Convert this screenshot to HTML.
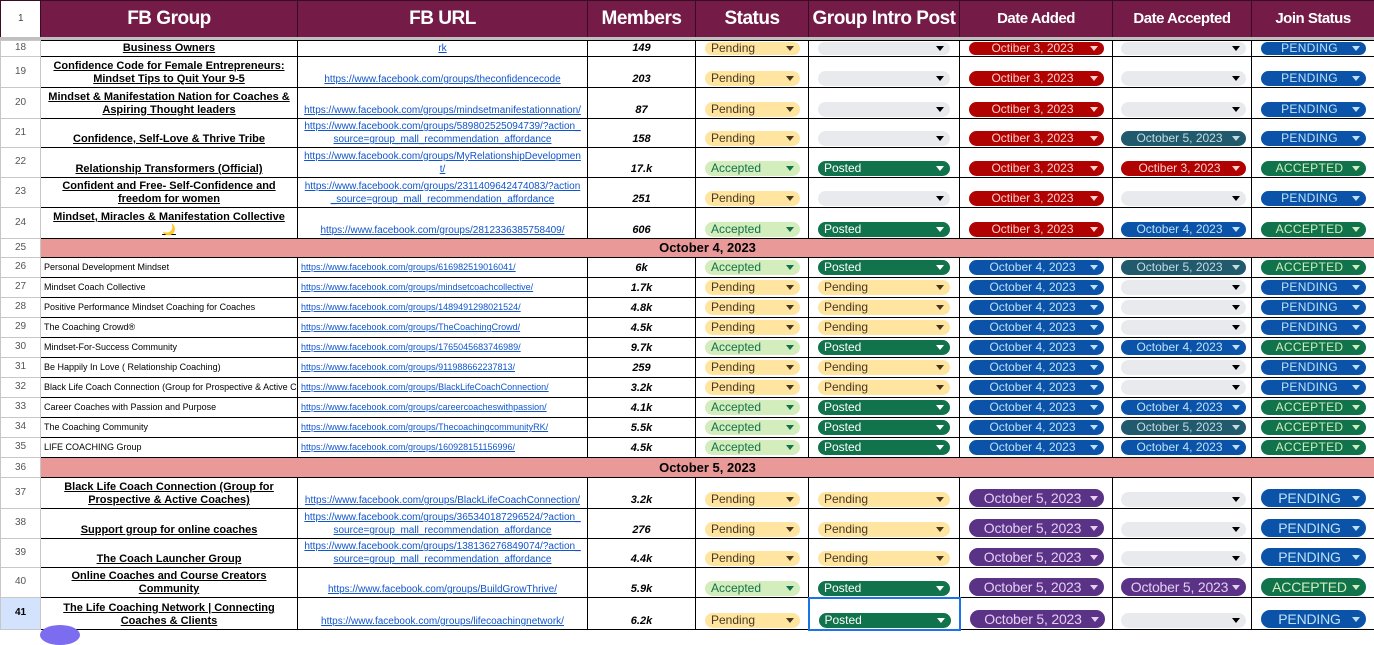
<!DOCTYPE html>
<html><head><meta charset="utf-8"><style>
*{margin:0;padding:0;box-sizing:border-box}
body{width:1374px;height:629px;overflow:hidden;background:#fff;font-family:"Liberation Sans",Arial,sans-serif;position:relative}
table{border-collapse:collapse;table-layout:fixed;width:1374px;position:absolute;left:0}
td{border:1px solid #000;overflow:hidden;white-space:nowrap;font-size:11px;line-height:12px;text-align:center;vertical-align:bottom;padding:0 0 1px 0}
td.n{border:1px solid #c7c7c7;color:#555;font-size:10px;vertical-align:middle;background:#fff}
#hd td{background:#741b47;color:#fff;font-weight:bold;font-size:19px;vertical-align:middle;border-color:#3a0c23;letter-spacing:-0.5px;line-height:20px}
#hd td.sm{font-size:15px}
#hd td.n{background:#fff;color:#444;font-weight:normal;font-size:10px}
.g{font-weight:bold;text-decoration:underline;font-size:11px;line-height:13px;white-space:normal;padding:0 3px 1px}
.s{text-align:left;font-size:9px;padding:0 0 1px 3px;vertical-align:middle}
.u{color:#1155cc;text-decoration:underline;font-size:10px;line-height:13px;white-space:normal;word-break:break-all;padding:0 6px 1px}
.u2{color:#1155cc;text-decoration:underline;font-size:9px;text-align:left;padding:0 0 1px 3px;vertical-align:middle}
.m{font-weight:bold;font-style:italic;font-size:11px;padding-bottom:2px}
.mm{vertical-align:middle;padding:0}
.band td{background:#ea9999;font-size:13px;font-weight:bold;vertical-align:middle;padding:0}
.p{display:flex;justify-content:space-between;align-items:center;height:15px;border-radius:8px;font-size:12px;padding:0 6px;line-height:15px}
.p:after{content:"";border-left:4px solid transparent;border-right:4px solid transparent;border-top:5px solid currentColor;margin-left:auto}
.w1{width:95px;margin-left:9px}.w2{width:132px;margin-left:9px}.w3{width:135px;margin-left:9px}.w4{width:125px;margin-left:8px}.w5{width:105px;margin-left:9px}
.Y{background:#ffe5a0;color:#473821}.A{background:#d4edbc;color:#11734b}.E{background:#e8eaed;color:#000}
.PO{background:#11734b;color:#fff}.R{background:#b10202;color:#ffcfc9}.B{background:#0a53a8;color:#bfe1f6}
.T{background:#215a6c;color:#c6dbe1}.PU{background:#5a3286;color:#e6cff2}
.JP{background:#0a53a8;color:#bfe1f6;letter-spacing:.3px}.JA{background:#11734b;color:#d4edbc;letter-spacing:.3px}
.R span,.B span,.T span,.PU span,.JP span,.JA span{flex:1;text-align:center}
.big .p{height:18px;font-size:14px;border-radius:9px;letter-spacing:-0.2px}
.big .p.sml{height:15px;font-size:12px;border-radius:8px;letter-spacing:0}
.r18 .p{height:13px;line-height:13px}
</style></head><body>
<table id="hd" style="top:0"><colgroup><col style="width:40px"><col style="width:257px"><col style="width:290px"><col style="width:108px"><col style="width:113px"><col style="width:151px"><col style="width:153px"><col style="width:139px"><col style="width:123px"></colgroup>
<tr style="height:37px"><td class="n">1</td><td>FB Group</td><td>FB URL</td><td>Members</td><td>Status</td><td>Group Intro Post</td><td class="sm">Date Added</td><td class="sm">Date Accepted</td><td class="sm">Join Status</td></tr></table>
<div style="position:absolute;top:37px;left:0;width:1374px;height:4px;background:#c0c0c0"></div>
<table style="top:40px"><colgroup><col style="width:40px"><col style="width:257px"><col style="width:290px"><col style="width:108px"><col style="width:113px"><col style="width:151px"><col style="width:153px"><col style="width:139px"><col style="width:123px"></colgroup>
<tr class="r18" style="height:16px"><td class="n">18</td><td class="g">Business Owners</td><td class="u">rk</td><td class="m">149</td><td><div class="p w1 Y">Pending</div></td><td><div class="p w2 E"></div></td><td><div class="p w3 R"><span>Octiber 3, 2023</span></div></td><td><div class="p w4 E"></div></td><td><div class="p w5 JP"><span>PENDING</span></div></td></tr>
<tr style="height:31px"><td class="n">19</td><td class="g">Confidence Code for Female Entrepreneurs: Mindset Tips to Quit Your 9-5</td><td class="u">https://www.facebook.com/groups/theconfidencecode</td><td class="m">203</td><td><div class="p w1 Y">Pending</div></td><td><div class="p w2 E"></div></td><td><div class="p w3 R"><span>Octiber 3, 2023</span></div></td><td><div class="p w4 E"></div></td><td><div class="p w5 JP"><span>PENDING</span></div></td></tr>
<tr style="height:31px"><td class="n">20</td><td class="g">Mindset &amp; Manifestation Nation for Coaches &amp; Aspiring Thought leaders</td><td class="u">https://www.facebook.com/groups/mindsetmanifestationnation/</td><td class="m">87</td><td><div class="p w1 Y">Pending</div></td><td><div class="p w2 E"></div></td><td><div class="p w3 R"><span>Octiber 3, 2023</span></div></td><td><div class="p w4 E"></div></td><td><div class="p w5 JP"><span>PENDING</span></div></td></tr>
<tr style="height:29px"><td class="n">21</td><td class="g">Confidence, Self-Love &amp; Thrive Tribe</td><td class="u">https://www.facebook.com/groups/589802525094739/?action_source=group_mall_recommendation_affordance</td><td class="m">158</td><td><div class="p w1 Y">Pending</div></td><td><div class="p w2 E"></div></td><td><div class="p w3 R"><span>Octiber 3, 2023</span></div></td><td><div class="p w4 T"><span>October 5, 2023</span></div></td><td><div class="p w5 JP"><span>PENDING</span></div></td></tr>
<tr style="height:30px"><td class="n">22</td><td class="g">Relationship Transformers (Official)</td><td class="u">https://www.facebook.com/groups/MyRelationshipDevelopment/</td><td class="m">17.k</td><td><div class="p w1 A">Accepted</div></td><td><div class="p w2 PO">Posted</div></td><td><div class="p w3 R"><span>Octiber 3, 2023</span></div></td><td><div class="p w4 R"><span>Octiber 3, 2023</span></div></td><td><div class="p w5 JA"><span>ACCEPTED</span></div></td></tr>
<tr style="height:30px"><td class="n">23</td><td class="g">Confident and Free- Self-Confidence and freedom for women</td><td class="u">https://www.facebook.com/groups/2311409642474083/?action_source=group_mall_recommendation_affordance</td><td class="m">251</td><td><div class="p w1 Y">Pending</div></td><td><div class="p w2 E"></div></td><td><div class="p w3 R"><span>Octiber 3, 2023</span></div></td><td><div class="p w4 E"></div></td><td><div class="p w5 JP"><span>PENDING</span></div></td></tr>
<tr style="height:31px"><td class="n">24</td><td class="g" style="padding:0 8px 1px">Mindset, Miracles &amp; Manifestation Collective<br>🌙</td><td class="u">https://www.facebook.com/groups/2812336385758409/</td><td class="m">606</td><td><div class="p w1 A">Accepted</div></td><td><div class="p w2 PO">Posted</div></td><td><div class="p w3 R"><span>Octiber 3, 2023</span></div></td><td><div class="p w4 B"><span>October 4, 2023</span></div></td><td><div class="p w5 JA"><span>ACCEPTED</span></div></td></tr>
<tr class="band" style="height:19px"><td class="n" style="background:#fff;font-weight:normal;font-size:10px">25</td><td colspan="8">October 4, 2023</td></tr>
<tr style="height:20px"><td class="n">26</td><td class="s">Personal Development Mindset</td><td class="u2">https://www.facebook.com/groups/616982519016041/</td><td class="m mm">6k</td><td class="mm"><div class="p w1 A">Accepted</div></td><td class="mm"><div class="p w2 PO">Posted</div></td><td class="mm"><div class="p w3 B"><span>October 4, 2023</span></div></td><td class="mm"><div class="p w4 T"><span>October 5, 2023</span></div></td><td class="mm"><div class="p w5 JA"><span>ACCEPTED</span></div></td></tr>
<tr style="height:20px"><td class="n">27</td><td class="s">Mindset Coach Collective</td><td class="u2">https://www.facebook.com/groups/mindsetcoachcollective/</td><td class="m mm">1.7k</td><td class="mm"><div class="p w1 Y">Pending</div></td><td class="mm"><div class="p w2 Y">Pending</div></td><td class="mm"><div class="p w3 B"><span>October 4, 2023</span></div></td><td class="mm"><div class="p w4 E"></div></td><td class="mm"><div class="p w5 JP"><span>PENDING</span></div></td></tr>
<tr style="height:20px"><td class="n">28</td><td class="s">Positive Performance Mindset Coaching for Coaches</td><td class="u2">https://www.facebook.com/groups/1489491298021524/</td><td class="m mm">4.8k</td><td class="mm"><div class="p w1 Y">Pending</div></td><td class="mm"><div class="p w2 Y">Pending</div></td><td class="mm"><div class="p w3 B"><span>October 4, 2023</span></div></td><td class="mm"><div class="p w4 E"></div></td><td class="mm"><div class="p w5 JP"><span>PENDING</span></div></td></tr>
<tr style="height:20px"><td class="n">29</td><td class="s">The Coaching Crowd®</td><td class="u2">https://www.facebook.com/groups/TheCoachingCrowd/</td><td class="m mm">4.5k</td><td class="mm"><div class="p w1 Y">Pending</div></td><td class="mm"><div class="p w2 Y">Pending</div></td><td class="mm"><div class="p w3 B"><span>October 4, 2023</span></div></td><td class="mm"><div class="p w4 E"></div></td><td class="mm"><div class="p w5 JP"><span>PENDING</span></div></td></tr>
<tr style="height:20px"><td class="n">30</td><td class="s">Mindset-For-Success Community</td><td class="u2">https://www.facebook.com/groups/1765045683746989/</td><td class="m mm">9.7k</td><td class="mm"><div class="p w1 A">Accepted</div></td><td class="mm"><div class="p w2 PO">Posted</div></td><td class="mm"><div class="p w3 B"><span>October 4, 2023</span></div></td><td class="mm"><div class="p w4 B"><span>October 4, 2023</span></div></td><td class="mm"><div class="p w5 JA"><span>ACCEPTED</span></div></td></tr>
<tr style="height:20px"><td class="n">31</td><td class="s">Be Happily In Love ( Relationship Coaching)</td><td class="u2">https://www.facebook.com/groups/911988662237813/</td><td class="m mm">259</td><td class="mm"><div class="p w1 Y">Pending</div></td><td class="mm"><div class="p w2 Y">Pending</div></td><td class="mm"><div class="p w3 B"><span>October 4, 2023</span></div></td><td class="mm"><div class="p w4 E"></div></td><td class="mm"><div class="p w5 JP"><span>PENDING</span></div></td></tr>
<tr style="height:20px"><td class="n">32</td><td class="s">Black Life Coach Connection (Group for Prospective &amp; Active Coaches)</td><td class="u2">https://www.facebook.com/groups/BlackLifeCoachConnection/</td><td class="m mm">3.2k</td><td class="mm"><div class="p w1 Y">Pending</div></td><td class="mm"><div class="p w2 Y">Pending</div></td><td class="mm"><div class="p w3 B"><span>October 4, 2023</span></div></td><td class="mm"><div class="p w4 E"></div></td><td class="mm"><div class="p w5 JP"><span>PENDING</span></div></td></tr>
<tr style="height:20px"><td class="n">33</td><td class="s">Career Coaches with Passion and Purpose</td><td class="u2">https://www.facebook.com/groups/careercoacheswithpassion/</td><td class="m mm">4.1k</td><td class="mm"><div class="p w1 A">Accepted</div></td><td class="mm"><div class="p w2 PO">Posted</div></td><td class="mm"><div class="p w3 B"><span>October 4, 2023</span></div></td><td class="mm"><div class="p w4 B"><span>October 4, 2023</span></div></td><td class="mm"><div class="p w5 JA"><span>ACCEPTED</span></div></td></tr>
<tr style="height:20px"><td class="n">34</td><td class="s">The Coaching Community</td><td class="u2">https://www.facebook.com/groups/ThecoachingcommunityRK/</td><td class="m mm">5.5k</td><td class="mm"><div class="p w1 A">Accepted</div></td><td class="mm"><div class="p w2 PO">Posted</div></td><td class="mm"><div class="p w3 B"><span>October 4, 2023</span></div></td><td class="mm"><div class="p w4 T"><span>October 5, 2023</span></div></td><td class="mm"><div class="p w5 JA"><span>ACCEPTED</span></div></td></tr>
<tr style="height:20px"><td class="n">35</td><td class="s">LIFE COACHING Group</td><td class="u2">https://www.facebook.com/groups/160928151156996/</td><td class="m mm">4.5k</td><td class="mm"><div class="p w1 A">Accepted</div></td><td class="mm"><div class="p w2 PO">Posted</div></td><td class="mm"><div class="p w3 B"><span>October 4, 2023</span></div></td><td class="mm"><div class="p w4 B"><span>October 4, 2023</span></div></td><td class="mm"><div class="p w5 JA"><span>ACCEPTED</span></div></td></tr>
<tr class="band" style="height:20px"><td class="n" style="background:#fff;font-weight:normal;font-size:10px">36</td><td colspan="8">October 5, 2023</td></tr>
<tr class="big" style="height:31px"><td class="n">37</td><td class="g">Black Life Coach Connection (Group for Prospective &amp; Active Coaches)</td><td class="u">https://www.facebook.com/groups/BlackLifeCoachConnection/</td><td class="m">3.2k</td><td><div class="p w1 Y sml">Pending</div></td><td><div class="p w2 Y sml">Pending</div></td><td><div class="p w3 PU"><span>October 5, 2023</span></div></td><td><div class="p w4 E sml"></div></td><td><div class="p w5 JP"><span>PENDING</span></div></td></tr>
<tr class="big" style="height:30px"><td class="n">38</td><td class="g">Support group for online coaches</td><td class="u">https://www.facebook.com/groups/365340187296524/?action_source=group_mall_recommendation_affordance</td><td class="m">276</td><td><div class="p w1 Y sml">Pending</div></td><td><div class="p w2 Y sml">Pending</div></td><td><div class="p w3 PU"><span>October 5, 2023</span></div></td><td><div class="p w4 E sml"></div></td><td><div class="p w5 JP"><span>PENDING</span></div></td></tr>
<tr class="big" style="height:29px"><td class="n">39</td><td class="g">The Coach Launcher Group</td><td class="u">https://www.facebook.com/groups/138136276849074/?action_source=group_mall_recommendation_affordance</td><td class="m">4.4k</td><td><div class="p w1 Y sml">Pending</div></td><td><div class="p w2 Y sml">Pending</div></td><td><div class="p w3 PU"><span>October 5, 2023</span></div></td><td><div class="p w4 E sml"></div></td><td><div class="p w5 JP"><span>PENDING</span></div></td></tr>
<tr class="big" style="height:30px"><td class="n">40</td><td class="g">Online Coaches and Course Creators Community</td><td class="u">https://www.facebook.com/groups/BuildGrowThrive/</td><td class="m">5.9k</td><td><div class="p w1 A sml">Accepted</div></td><td><div class="p w2 PO sml">Posted</div></td><td><div class="p w3 PU"><span>October 5, 2023</span></div></td><td><div class="p w4 PU"><span>October 5, 2023</span></div></td><td><div class="p w5 JA"><span>ACCEPTED</span></div></td></tr>
<tr class="big" style="height:32px"><td class="n" style="background:#d3e3fd;color:#000;font-weight:bold">41</td><td class="g">The Life Coaching Network | Connecting Coaches &amp; Clients</td><td class="u">https://www.facebook.com/groups/lifecoachingnetwork/</td><td class="m">6.2k</td><td><div class="p w1 Y sml">Pending</div></td><td style="border:2px solid #1a73e8"><div class="p w2 PO sml">Posted</div></td><td><div class="p w3 PU"><span>October 5, 2023</span></div></td><td><div class="p w4 E sml"></div></td><td><div class="p w5 JP"><span>PENDING</span></div></td></tr>
</table>
<div style="position:absolute;left:40px;top:625px;width:40px;height:20px;border-radius:50%;background:#7b6cf0"></div>
</body></html>
